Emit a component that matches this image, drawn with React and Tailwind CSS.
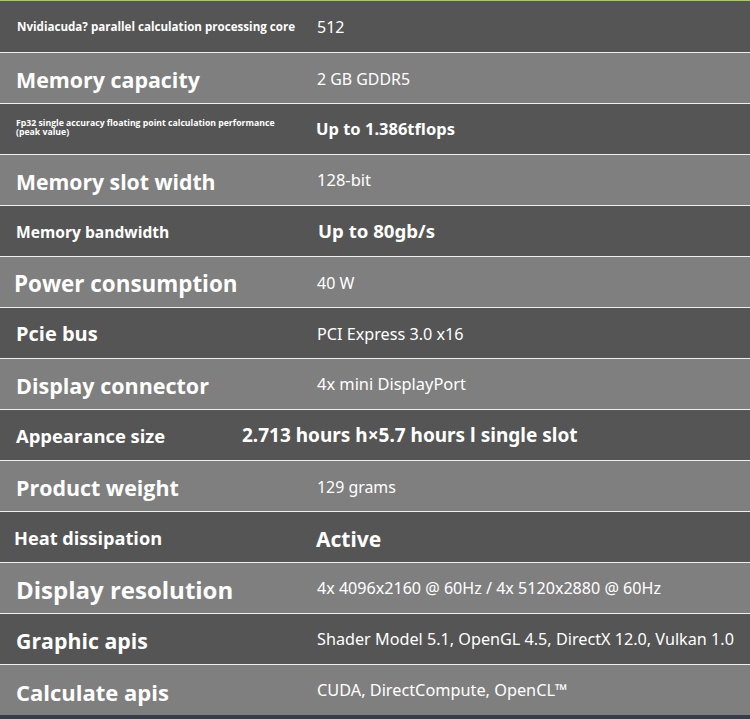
const rows = [
  { label: "Nvidiacuda? parallel calculation processing core", lc: "text-[11.6px] pl-[17px]", value: "512", vc: "text-[16px] font-normal pt-[1px]", lw: "w-[317px]" },
  { label: "Memory capacity", lc: "text-[21.4px] pl-[16px] pt-[4px]", value: "2 GB GDDR5", vc: "text-[15.9px] font-normal pt-[3px]", lw: "w-[317px]" },
  { label: "Fp32 single accuracy floating point calculation performance", sub: "(peak value)", lc: "text-[8.7px] pl-[16px] leading-[9.5px] pb-[2px]", value: "Up to 1.386tflops", vc: "text-[16.5px] font-bold", lw: "w-[316px]" },
  { label: "Memory slot width", lc: "text-[21.2px] pl-[16px] pt-[3px]", value: "128-bit", vc: "text-[16.5px] font-normal pt-[1px]", lw: "w-[317px]" },
  { label: "Memory bandwidth", lc: "text-[15.6px] pl-[16px] pt-[3px]", value: "Up to 80gb/s", vc: "text-[18.6px] font-bold", lw: "w-[318px]" },
  { label: "Power consumption", lc: "text-[22.4px] pl-[14px] pt-[4px]", value: "40 W", vc: "text-[16px] font-normal pt-[2px]", lw: "w-[317px]" },
  { label: "Pcie bus", lc: "text-[20px] pl-[16px] pt-[1px]", value: "PCI Express 3.0 x16", vc: "text-[16.2px] font-normal pt-[2px]", lw: "w-[317px]" },
  { label: "Display connector", lc: "text-[21.5px] pl-[16px] pt-[4px]", value: "4x mini DisplayPort", vc: "text-[16.4px] font-normal pt-[1px]", lw: "w-[317px]" },
  { label: "Appearance size", lc: "text-[18.4px] pl-[16px] pt-[2px]", value: "2.713 hours h×5.7 hours l single slot", vc: "text-[19px] font-bold", lw: "w-[242px]" },
  { label: "Product weight", lc: "text-[21.4px] pl-[16px] pt-[4px]", value: "129 grams", vc: "text-[15.9px] font-normal pt-[3px]", lw: "w-[317px]" },
  { label: "Heat dissipation", lc: "text-[18.2px] pl-[14px] pt-[4px]", value: "Active", vc: "text-[21px] font-bold pt-[6px]", lw: "w-[316px]" },
  { label: "Display resolution", lc: "text-[24px] pl-[16px] pt-[4px]", value: "4x 4096x2160 @ 60Hz / 4x 5120x2880 @ 60Hz", vc: "text-[16.1px] font-normal pt-[1px]", lw: "w-[317px]" },
  { label: "Graphic apis", lc: "text-[21.3px] pl-[16px] pt-[3px]", value: "Shader Model 5.1, OpenGL 4.5, DirectX 12.0, Vulkan 1.0", vc: "text-[16.2px] font-normal pt-[1px]", lw: "w-[317px]" },
  { label: "Calculate apis", lc: "text-[22px] pl-[16px] pt-[4px]", value: "CUDA, DirectCompute, OpenCL™", vc: "text-[16.3px] font-normal", lw: "w-[317px]" },
];

export default function App() {
  return (
    <div className="w-[750px] h-[719px] overflow-hidden bg-[#3a3d47] flex flex-col" style={{ fontFamily: '"Open Sans", "Noto Sans", sans-serif' }}>
      <div className="h-px bg-[#a7c47a] shrink-0" />
      {rows.map((r, i) => {
        const dark = i % 2 === 0;
        return (
          <div
            key={i}
            className={`${i === 0 ? "h-[51px]" : "h-[50px]"} ${i < rows.length - 1 ? "border-b border-[#eeeeee]" : ""} ${dark ? "bg-[#555555]" : "bg-[#7f7f7f]"} flex items-center text-white shrink-0 box-content`}
          >
            <div className={`${r.lw} shrink-0 font-bold ${r.lc}`}>
              <div>{r.label}</div>
              {r.sub && <div>{r.sub}</div>}
            </div>
            <div className={`${r.vc} whitespace-nowrap`} style={{ fontFamily: '"Noto Sans", "Open Sans", sans-serif' }}>
              {r.value}
            </div>
          </div>
        );
      })}
    </div>
  );
}
